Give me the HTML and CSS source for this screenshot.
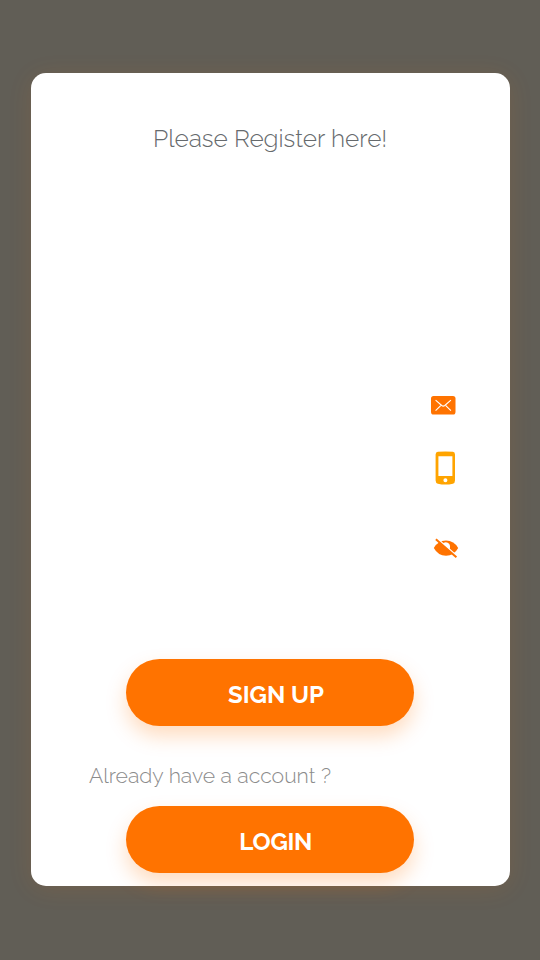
FILE: index.html
```html
<!DOCTYPE html>
<html lang="en">
<head>
<meta charset="utf-8">
<title>Register</title>
<link rel="stylesheet" href="styles.css">
</head>
<body>
<main class="card">
  <h1 class="title">Please Register here!</h1>
  <div class="icons">
    <svg class="mail" viewBox="0 0 24 18"><rect width="24" height="18" rx="2.5" fill="#ff7300"/><path d="M4.5 4l6 5.2q1.5 1.2 3 0l6-5.2M4.5 14.2l5-4.8M19.5 14.2l-5-4.8" fill="none" stroke="#fff" stroke-width="1.1"/></svg>
    <svg class="phone" viewBox="0 0 20 34"><path fill="#ffa400" fill-rule="evenodd" d="M2.9.8Q10.400 .1 17.900.8 20 1 20 3.500V29.500Q20 32 17.900 32.700 10.400 34.500 2.900 32.700 .6 32 .6 29.500V3.500Q.6 1 2.900.8ZM3.400 5.200V25H17.400V5.200ZM10.400 27.200a2 2 0 1 0 0 4 2 2 0 1 0 0-4Z"/></svg>
    <svg class="eye" viewBox="0 0 26 22"><path fill="#ff7300" d="M.8 11Q5 3.500 13 3.500T25.200 11Q21 18.700 13 18.700T.8 11Z"/><path d="M9 7Q12 4.300 15.200 6 18.300 8.500 16.300 12.700Z" fill="#fff"/><path d="M3.900 1.400L24.400 19.400" stroke="#fff" stroke-width="1.600"/><path d="M2.900 2.300L23.400 20.300" stroke="#ff7300" stroke-width="2"/></svg>
  </div>
  <button class="button signup"><span>SIGN UP</span></button>
  <p class="prompt">Already have a account ?</p>
  <button class="button login"><span>LOGIN</span></button>
</main>
</body>
</html>
```
FILE: styles.css
```css
* { box-sizing: border-box; }
body {
  margin: 0;
  min-height: 960px;
  padding: 73.4px 30px 0 31.4px;
  background: #615e56;
  font-family: Raleway, Lato, sans-serif;
  overflow: hidden;
}
.card {
  display: flex;
  flex-direction: column;
  height: 813px;
  padding-top: 50px;
  background: #fff;
  border-radius: 15px;
  box-shadow: 0 3px 24px rgba(255, 115, 0, .11);
}
.title {
  margin: 0 0 0 121.6px;
  height: 32px;
  font-size: 24.4px;
  line-height: 32px;
  font-weight: 300;
  color: #666a6d;
  white-space: nowrap;
}
.icons {
  display: flex;
  flex-direction: column;
  height: 504px;
  padding: 241.1px 0 0 399.8px;
}
.mail { width: 24.5px; height: 18.5px; }
.phone { width: 20px; height: 34px; margin: 35.8px 0 0 4.2px; }
.eye { width: 26px; height: 22px; margin: 52.2px 0 0 2px; }
.button {
  flex: none;
  width: 288px;
  height: 67px;
  margin: 0 0 0 94.6px;
  padding: 5px 0 0;
  border: 0;
  border-radius: 34px;
  background: #ff7300;
  box-shadow: 0 10px 20px rgba(255, 115, 0, .25);
  color: #fff;
  font: 700 24px/30px Raleway, Lato, sans-serif;
  text-align: left;
}
.signup span { margin-left: 102px; }
.login span { margin-left: 113.3px; letter-spacing: -.3px; }
.prompt {
  margin: 36px 0 16px 57.6px;
  height: 28px;
  font-size: 21.2px;
  line-height: 28px;
  font-weight: 300;
  color: #8b8b8b;
  white-space: nowrap;
}
```
